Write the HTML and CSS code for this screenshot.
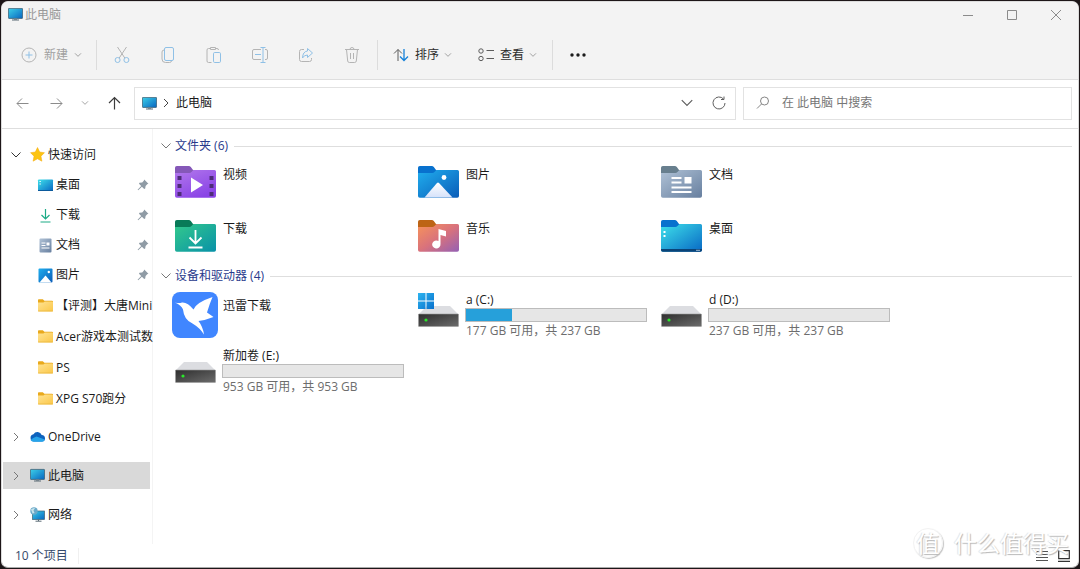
FILE: index.html
```html
<!DOCTYPE html>
<html lang="zh-CN">
<head>
<meta charset="utf-8">
<title>此电脑</title>
<link rel="stylesheet" href="styles.css">
</head>
<body>
<svg class="defs" width="0" height="0" aria-hidden="true">
  <defs>
    <linearGradient id="g-screen" x1="0" y1="0" x2="1" y2="1"><stop offset="0" stop-color="#3cd0e8"/><stop offset="1" stop-color="#0865c0"/></linearGradient>
    <linearGradient id="g-video" x1="0" y1="0" x2="0.6" y2="1"><stop offset="0" stop-color="#b278ec"/><stop offset="1" stop-color="#8a44e6"/></linearGradient>
    <linearGradient id="g-pic" x1="0" y1="0" x2="1" y2="1"><stop offset="0" stop-color="#20aeee"/><stop offset="1" stop-color="#0a5cb8"/></linearGradient>
    <linearGradient id="g-doc" x1="0" y1="0" x2="1" y2="1"><stop offset="0" stop-color="#b0c2d6"/><stop offset="1" stop-color="#677f9f"/></linearGradient>
    <linearGradient id="g-down" x1="0" y1="0" x2="1" y2="1"><stop offset="0" stop-color="#33c98c"/><stop offset="1" stop-color="#0891a8"/></linearGradient>
    <linearGradient id="g-music" x1="0" y1="0" x2="1" y2="1"><stop offset="0" stop-color="#f7935a"/><stop offset="0.5" stop-color="#d9727c"/><stop offset="1" stop-color="#9460b4"/></linearGradient>
    <linearGradient id="g-desk" x1="0" y1="0" x2="1" y2="1"><stop offset="0" stop-color="#3ee0ea"/><stop offset="1" stop-color="#0868c4"/></linearGradient>
    <linearGradient id="g-yellow" x1="0" y1="0" x2="1" y2="1"><stop offset="0" stop-color="#ffe393"/><stop offset="1" stop-color="#fbc748"/></linearGradient>
    <linearGradient id="g-peak" x1="0" y1="0" x2="0" y2="1"><stop offset="0" stop-color="#ffffff"/><stop offset="1" stop-color="#d6e2fa"/></linearGradient>
    <linearGradient id="g-box" x1="0" y1="0" x2="1" y2="1"><stop offset="0" stop-color="#2e2e2e"/><stop offset="1" stop-color="#6c6c6c"/></linearGradient>
    <linearGradient id="g-win" x1="0" y1="0" x2="1" y2="1"><stop offset="0" stop-color="#2cb4f0"/><stop offset="1" stop-color="#0870cc"/></linearGradient>
    <symbol id="pc" viewBox="0 0 15 13"><rect x="0.4" y="0.4" width="14.2" height="10" rx="0.6" fill="url(#g-screen)" stroke="#3d6173" stroke-width="0.8"/><path d="M6 10.5h3v1.2H6z" fill="#76858e"/><path d="M4 12h7" stroke="#5b6b75"/></symbol>
    <symbol id="chev-down" viewBox="0 0 12 12"><path d="M1.5 3.5 6 8l4.500-4.500" fill="none" stroke="currentColor"/></symbol>
    <symbol id="chev-right" viewBox="0 0 12 12"><path d="M4 2l4 4-4 4" fill="none" stroke="currentColor"/></symbol>
    <symbol id="folder-shape" viewBox="0 0 41 32"><path d="M0 7h14.500q1 0 2-1l1.200-1.200q.8-.7 1.800-.7H39.500q1.500 0 1.500 1.500V30q0 1.800-1.800 1.800H1.800Q0 31.800 0 30z"/></symbol>
    <symbol id="tab-shape" viewBox="0 0 41 32"><path d="M0 9V1.800Q0 0 1.800 0H13.800q1.200 0 2 1l2.400 3.200H38V9z"/></symbol>
    <symbol id="folder-small" viewBox="0 0 15 13"><path d="M0 3V1q0-.8.8-.8h4L6.400 1.800H14q1 0 1 .8V5H0z" fill="#e9a91c"/><path d="M0 3.400h5.400l1.400-1H14.200q.8 0 .8.800v8.400q0 .9-.9.9H.9q-.9 0-.9-.9z" fill="url(#g-yellow)"/><path d="M0 12h15" stroke="#e6b53d" stroke-width="0.7"/></symbol>
    <symbol id="pin" viewBox="0 0 12 12"><path d="M7.200.6 11.400 4.800 10.200 5.200 8.600 6.900 8.200 9.600 7.200 10 4.900 7.700 1.200 11.200.6 10.700 4.200 7 2 4.800 2.400 3.800 5.200 3.400 6.800 1.800z" fill="#8f9ba5"/></symbol>
    <symbol id="drive" viewBox="0 0 41 22"><path d="M9 1h23l8 8H1z" fill="#dcdde1"/><rect x="0.500" y="9" width="40" height="12.500" rx="0.600" fill="url(#g-box)" stroke="#9c9c9c" stroke-width="0.600"/><circle cx="8" cy="15" r="1.600" fill="#2ae82a"/></symbol>
  </defs>
</svg>

<div class="window">
  <header class="chrome">
    <div class="titlebar">
      <svg class="pc-icon"><use href="#pc"/></svg>
      <span class="title">此电脑</span>
      <div class="caption-buttons">
        <button aria-label="最小化"><svg width="12" height="12" viewBox="0 0 12 12"><path d="M1 6.500h10"/></svg></button>
        <button aria-label="最大化"><svg width="12" height="12" viewBox="0 0 12 12"><path d="M1.500 1.500h9v9h-9z"/></svg></button>
        <button aria-label="关闭"><svg width="12" height="12" viewBox="0 0 12 12"><path d="M1 1l10 10M11 1 1 11"/></svg></button>
      </div>
    </div>
    <div class="toolbar">
      <button class="tool-text muted new"><svg width="16" height="16" viewBox="0 0 16 16"><circle cx="8" cy="8" r="7" stroke="#b4b4b4"/><path d="M8 4.500v7M4.500 8h7" stroke="#8fc0e6"/></svg>新建<svg class="tiny"><use href="#chev-down"/></svg></button>
      <span class="sep"></span>
      <button class="tool muted" aria-label="剪切"><svg width="16" height="18" viewBox="0 0 16 18"><path d="M3.500 1 10.800 12M12.500 1 5.200 12" stroke="#b4b4b4"/><circle cx="3.600" cy="14" r="2.500" stroke="#8fc0e6"/><circle cx="12.400" cy="14" r="2.500" stroke="#8fc0e6"/></svg></button>
      <button class="tool muted" aria-label="复制"><svg width="16" height="18" viewBox="0 0 16 18"><path d="M4 4q-2 .2-2 2v7q0 3.500 3.500 3.500h4q1.700 0 2-1.500" stroke="#b4b4b4"/><rect x="4.500" y="1.500" width="9" height="13" rx="1.500" stroke="#8fc0e6"/></svg></button>
      <button class="tool muted" aria-label="粘贴"><svg width="16" height="18" viewBox="0 0 16 18"><path d="M4.500 2.500h-2q-1.500 0-1.500 1.500v11q0 1.500 1.500 1.500h3M9.500 2.500h1.500q1.500 0 1.500 1.500M4.500 1.500h5v2h-5z" stroke="#b4b4b4"/><rect x="7.500" y="6.500" width="7" height="10" rx="1.200" stroke="#8fc0e6"/></svg></button>
      <button class="tool muted" aria-label="重命名"><svg width="18" height="18" viewBox="0 0 18 18"><path d="M10 3.500H3q-1.500 0-1.500 1.500v7q0 1.500 1.500 1.500h7M14 3.500h1q1.500 0 1.500 1.500v7q0 1.500-1.500 1.500h-1" stroke="#b4b4b4"/><path d="M4 8.500h6M9.500 1.500h5M9.500 16.500h5M12 1.500v15" stroke="#8fc0e6"/></svg></button>
      <button class="tool muted" aria-label="共享"><svg width="16" height="16" viewBox="0 0 16 16"><path d="M6 2.500H3.500q-2 0-2 2v8q0 2 2 2h8q2 0 2-2V11" stroke="#b4b4b4"/><path d="M9.500 1.500 14.500 6l-5 4.500V8Q6 8 4.500 11 4.800 4.500 9.500 4z" stroke="#8fc0e6"/></svg></button>
      <button class="tool muted" aria-label="删除"><svg width="16" height="18" viewBox="0 0 16 18"><path d="M1 3.500h14M6 3.500q0-2 2-2t2 2M2.500 3.500l1.200 11.500q.2 1.500 1.700 1.500h5.200q1.500 0 1.700-1.500l1.200-11.500M6.500 7v6M9.500 7v6" stroke="#b4b4b4"/></svg></button>
      <span class="sep"></span>
      <button class="tool-text sort"><svg width="16" height="14" viewBox="0 0 16 14"><path d="M5 13V1.500M1 5.500l4-4 4 4" stroke="#5c5c5c"/><path d="M11 1v11.500M7 8.500l4 4 4-4" stroke="#1581d8" stroke-width="1.300"/></svg>排序<svg class="tiny"><use href="#chev-down"/></svg></button>
      <button class="tool-text view"><svg width="16" height="14" viewBox="0 0 16 14"><path d="M8.500 2.500h7.500M8.500 10.500h7.500" stroke="#5c5c5c"/><circle cx="3" cy="3" r="2.200" stroke="#5c5c5c"/><circle cx="3" cy="10.500" r="2.200" stroke="#5c5c5c"/></svg>查看<svg class="tiny"><use href="#chev-down"/></svg></button>
      <span class="sep"></span>
      <button class="tool" aria-label="查看更多"><svg width="16" height="4" viewBox="0 0 16 4"><g fill="#1b1b1b"><circle cx="2" cy="2" r="1.700"/><circle cx="8" cy="2" r="1.700"/><circle cx="14" cy="2" r="1.700"/></g></svg></button>
    </div>
  </header>

  <nav class="navbar" aria-label="导航">
    <div class="history">
      <button aria-label="后退"><svg width="13" height="13" viewBox="0 0 13 13"><path d="M12.500 6.500H1M6 1.500l-5 5 5 5" stroke="#8b8b8b"/></svg></button>
      <button aria-label="前进"><svg width="13" height="13" viewBox="0 0 13 13"><path d="M.5 6.500H12M7 1.500l5 5-5 5" stroke="#8b8b8b"/></svg></button>
      <button class="recent" aria-label="最近位置"><svg class="tiny"><use href="#chev-down"/></svg></button>
      <button aria-label="上移"><svg width="13" height="14" viewBox="0 0 13 14"><path d="M6.500 13.500V1.500M1 7l5.500-5.500L12 7" stroke="#3c3c3c" stroke-width="1.200"/></svg></button>
    </div>
    <div class="address">
      <svg class="pc-icon"><use href="#pc"/></svg>
      <svg class="crumb"><use href="#chev-right"/></svg>
      <span class="path">此电脑</span>
      <button aria-label="以前的位置"><svg width="14" height="14"><use href="#chev-down"/></svg></button>
      <button aria-label="刷新"><svg width="14" height="14" viewBox="0 0 14 14"><path d="M11.500 3A6 6 0 1 0 13 7M12 .5V3.500H9" stroke="#5f5f5f"/></svg></button>
    </div>
    <label class="search">
      <svg width="14" height="14" viewBox="0 0 14 14"><circle cx="8.500" cy="5" r="4" stroke="#858585"/><path d="M5.500 8 1 12.500" stroke="#858585"/></svg>
      <input type="text" aria-label="搜索" placeholder="在 此电脑 中搜索">
    </label>
  </nav>

  <div class="body">
    <aside class="sidebar">
      <a class="root open" href="#"><svg class="arrow"><use href="#chev-down"/></svg><svg class="ico" viewBox="0 0 15 15"><path d="M7.500.5 9.700 5l4.800.7-3.500 3.500.9 5-4.400-2.400L3.100 14.200 4 9.200.5 5.700 5.300 5z" fill="#fcc410" stroke="#f5a80c" stroke-width="0.500"/></svg>快速访问</a>
      <a class="row" href="#"><svg class="ico" viewBox="0 0 15 15"><rect y="1.500" width="15" height="11.500" rx="0.800" fill="url(#g-desk)"/><path d="M0 12.500h15" stroke="#0b5a9c"/><path d="M1.500 3.500h1.300M1.500 6h1.300" stroke="#fff"/></svg><span class="name">桌面</span><svg class="pin"><use href="#pin"/></svg></a>
      <a class="row" href="#"><svg class="ico" viewBox="0 0 15 15"><path d="M7.500 1v9.500M3.500 7l4 4 4-4M2.500 14h10" fill="none" stroke="#1cab86" stroke-width="1.200"/></svg><span class="name">下载</span><svg class="pin"><use href="#pin"/></svg></a>
      <a class="row" href="#"><svg class="ico" viewBox="0 0 15 15"><rect x="1.500" y="0.500" width="12" height="14" rx="1" fill="url(#g-doc)"/><path d="M3.500 5h4M3.500 7.500h4M3.500 10h8" stroke="#fff"/><path d="M8.500 4.500h3v3h-3z" fill="#fff"/></svg><span class="name">文档</span><svg class="pin"><use href="#pin"/></svg></a>
      <a class="row" href="#"><svg class="ico" viewBox="0 0 15 15"><rect x="0.500" y="0.500" width="14" height="14" rx="1" fill="url(#g-pic)"/><path d="M1.500 14.500 7.500 7.500l6 7z" fill="#fff"/><circle cx="10.800" cy="4" r="1.200" fill="#fff"/></svg><span class="name">图片</span><svg class="pin"><use href="#pin"/></svg></a>
      <a class="row folder-row" href="#"><svg class="ico"><use href="#folder-small"/></svg><span class="name">【评测】大唐Mini</span></a>
      <a class="row folder-row" href="#"><svg class="ico"><use href="#folder-small"/></svg><span class="name">Acer游戏本测试数</span></a>
      <a class="row folder-row" href="#"><svg class="ico"><use href="#folder-small"/></svg><span class="name">PS</span></a>
      <a class="row folder-row" href="#"><svg class="ico"><use href="#folder-small"/></svg><span class="name">XPG S70跑分</span></a>
      <a class="root" href="#"><svg class="arrow"><use href="#chev-right"/></svg><svg class="ico" viewBox="0 0 15 15"><path d="M3.800 12.500a3.700 3.700 0 0 1-.3-7.300A4.500 4.500 0 0 1 11.700 6q3.300.4 3.300 3.400T12 12.500z" fill="#0d62bd"/><path d="M.5 11Q3 8.500 6.500 7.500L14.800 10.500q-.8 2.200-2.800 2.200H3.800Q1.500 12.700.5 11z" fill="#27a4ea"/></svg>OneDrive</a>
      <a class="root selected" href="#"><svg class="arrow"><use href="#chev-right"/></svg><svg class="ico"><use href="#pc"/></svg>此电脑</a>
      <a class="root" href="#"><svg class="arrow"><use href="#chev-right"/></svg><svg class="ico" viewBox="0 0 15 15"><rect x="2.500" y="4" width="12" height="8.500" fill="url(#g-screen)" stroke="#3d6173" stroke-width="0.700"/><path d="M5.500 14.200h6M8.500 12.500v1.500" stroke="#5b6b75"/><circle cx="4" cy="4" r="3.700" fill="#6aa9c9"/><path d="M1 2.500q2-2 4-1.500L3.500 3.500 4.500 6 2.500 6.500z" fill="#c7e3ea"/></svg>网络</a>
    </aside>

    <main class="content">
      <section>
        <h2><svg class="arrow"><use href="#chev-down"/></svg>文件夹 (6)</h2>
        <div class="grid folders">
          <a class="item" href="#"><svg class="folder" viewBox="0 0 41 32"><use href="#tab-shape" fill="#8558b8"/><use href="#folder-shape" fill="url(#g-video)"/><g fill="#4d2c78"><path d="M2.500 10h4v4h-4zM2.500 18h4v4h-4zM2.500 26h4v4h-4zM34.500 10h4v4h-4zM34.500 18h4v4h-4zM34.500 26h4v4h-4z"/></g><path d="M16 11.500 28 19 16 26.500z" fill="#fff"/></svg><span>视频</span></a>
          <a class="item" href="#"><svg class="folder" viewBox="0 0 41 32"><use href="#tab-shape" fill="#0871ce"/><use href="#folder-shape" fill="url(#g-pic)"/><path d="M6.500 31.500 19 17q1-1 2 0l13.500 14.500z" fill="url(#g-peak)"/><circle cx="26" cy="11.500" r="2.400" fill="#fff"/></svg><span>图片</span></a>
          <a class="item" href="#"><svg class="folder" viewBox="0 0 41 32"><use href="#tab-shape" fill="#687f8e"/><use href="#folder-shape" fill="url(#g-doc)"/><path d="M10.500 12h10M10.500 16.500h10M10.500 21.500h20M10.500 26h20" stroke="#fff" stroke-width="1.800"/><path d="M23.500 11h7v6.500h-7z" fill="#fff"/></svg><span>文档</span></a>
          <a class="item" href="#"><svg class="folder" viewBox="0 0 41 32"><use href="#tab-shape" fill="#087a58"/><use href="#folder-shape" fill="url(#g-down)"/><path d="M20.500 10v13M14.500 17.500l6 6 6-6M13.500 27.500h14" fill="none" stroke="#fff" stroke-width="1.800"/></svg><span>下载</span></a>
          <a class="item" href="#"><svg class="folder" viewBox="0 0 41 32"><use href="#tab-shape" fill="#bd6415"/><use href="#folder-shape" fill="url(#g-music)"/><path d="M20.500 9l7.500 2v5.500l-5.500-1.500V24a4.200 4 0 1 1-2-3z" fill="#fff"/></svg><span>音乐</span></a>
          <a class="item" href="#"><svg class="folder" viewBox="0 0 41 32"><use href="#tab-shape" fill="#0871ce"/><use href="#folder-shape" fill="url(#g-desk)"/><path d="M0 29h41v1q0 1.800-1.800 1.800H1.800Q0 31.800 0 30z" fill="#0a4478"/><path d="M2.500 11h2v2h-2zM2.500 15h2v2h-2z" fill="#fff"/><path d="M35 30.300h4" stroke="#c8dcec" stroke-width="0.800"/></svg><span>桌面</span></a>
        </div>
      </section>
      <section>
        <h2><svg class="arrow"><use href="#chev-down"/></svg>设备和驱动器 (4)</h2>
        <div class="grid drives">
          <a class="item app" href="#"><svg class="xunlei" viewBox="0 0 46 46"><rect width="46" height="46" rx="8" fill="#4086ff"/><path d="M3 10.500Q7 11.500 10 10.500q5.500-.5 11.500 7Q24 10.500 40.500 5 37.500 12 35 20.500l6.500 4.500Q34 28 26.500 29 31 35 32 42.500 28 36 20.500 31.500 12 28 11 17.500 9.500 13.500 3 10.500z" fill="#fff"/></svg><span>迅雷下载</span></a>
          <a class="item" href="#"><svg class="disk" viewBox="0 0 41 34"><use href="#drive" y="12" width="41" height="22"/><path d="M0 0h7.500v7.500H0zM8.500 0H16v7.500H8.500zM0 8.500h7.500V16H0zM8.500 8.500H16V16H8.500z" fill="url(#g-win)"/></svg><div class="info"><span>a (C:)</span><div class="meter"><i style="width:25.500%"></i></div><small>177 GB 可用，共 237 GB</small></div></a>
          <a class="item" href="#"><svg class="disk" viewBox="0 0 41 34"><use href="#drive" y="12" width="41" height="22"/></svg><div class="info"><span>d (D:)</span><div class="meter"></div><small>237 GB 可用，共 237 GB</small></div></a>
          <a class="item" href="#"><svg class="disk" viewBox="0 0 41 34"><use href="#drive" y="12" width="41" height="22"/></svg><div class="info"><span>新加卷 (E:)</span><div class="meter"></div><small>953 GB 可用，共 953 GB</small></div></a>
        </div>
      </section>
    </main>
  </div>

  <footer class="status">
    <span class="count">10 个项目</span>
    <div class="views">
      <button aria-label="详细信息"><svg width="12" height="12" viewBox="0 0 12 12"><path d="M0 1.500h12M0 4.500h12M0 7.500h12M0 10.500h12" stroke="#555"/></svg></button>
      <button aria-label="大图标"><svg width="12" height="12" viewBox="0 0 12 12"><path d="M.7.700h10.600v8H.7zM0 11.400h12" stroke="#333" stroke-width="1.200"/></svg></button>
    </div>
  </footer>
  <div class="watermark"><span class="seal">值</span><span>什么值得买</span></div>
</div>
</body>
</html>
```
FILE: styles.css
```css
* { box-sizing: border-box; }

html, body { height: 100%; }

body {
  margin: 0;
  padding: 1px;
  background: #1d1618;
  color: #1a1a1a;
  font: 12px/16px "Open Sans", "Noto Sans CJK SC", sans-serif;
}

svg { display: block; flex: none; fill: none; overflow: visible; }
a { color: inherit; text-decoration: none; }
button {
  display: flex;
  align-items: center;
  justify-content: center;
  padding: 0;
  border: 0;
  background: none;
  color: inherit;
  font: inherit;
}

.defs { position: absolute; }

.window {
  position: relative;
  display: flex;
  flex-direction: column;
  height: 100%;
  overflow: hidden;
  border: 1px solid #dcdcdc;
  border-bottom-color: #aaa;
  border-radius: 7px;
  background: #fff;
}

.chrome { background: #f3f3f3; border-bottom: 1px solid #dedede; }

.pc-icon { width: 15px; height: 13px; }
.tiny { width: 8px; height: 8px; color: #777; }
.arrow { width: 12px; height: 12px; color: #777; }

/* title bar */
.titlebar { display: flex; align-items: center; height: 25px; padding-left: 6px; }
.title { margin-left: 2px; color: #999; }
.caption-buttons { display: flex; margin-left: auto; }
.caption-buttons button { width: 44px; height: 25px; }
.caption-buttons svg { stroke: #8b8b8b; }

/* command bar */
.toolbar { display: flex; align-items: center; height: 52px; padding: 4px 0 0 19px; color: #2c2c2c; }
.sep { width: 1px; height: 30px; margin: 0 2px; background: #dcdcdc; }
.tool { width: 46px; height: 32px; }
.tool-text { height: 32px; gap: 6px; }
.tool-text .tiny { margin-left: -1px; }
.new { gap: 7px; margin-right: 12px; }
.sort { margin-left: 13px; }
.view { margin: 0 13px 0 26px; }
.muted { color: #a0a0a0; }

/* address row */
.navbar {
  display: flex;
  align-items: center;
  height: 49px;
  padding: 0 6px 2px 0;
  border-bottom: 1px solid #dedede;
}
.history { display: flex; width: 132px; padding-left: 3px; }
.history button { width: 34px; height: 32px; }
.history .recent { width: 24px; }
.address, .search {
  display: flex;
  align-items: center;
  height: 33px;
  min-width: 0;
  border: 1px solid #e2e2e2;
}
.address { flex: 593; padding-left: 7px; }
.crumb { width: 12px; height: 12px; margin: 0 4px 0 3px; color: #444; }
.path { flex: 1; }
.address button { width: 32px; height: 30px; color: #5f5f5f; }
.search { flex: 315; margin-left: 7px; padding-left: 12px; }
.search input {
  flex: 1;
  min-width: 0;
  margin-left: 12px;
  padding: 0;
  border: 0;
  outline: 0;
  background: none;
  font: inherit;
}
.search input::placeholder { color: #767676; opacity: 1; }

/* body */
.body { display: flex; flex: 1; min-height: 0; }
.sidebar {
  width: 151px;
  padding: 12px 2px 0 1px;
  border-right: 1px solid #f4f4f4;
  white-space: nowrap;
}
.ico { width: 15px; height: 15px; margin-right: 3px; }
.root { display: flex; align-items: center; height: 27px; margin-bottom: 12px; padding-left: 7px; }
.root .arrow { margin-right: 8px; }
.root.open { margin-bottom: 2px; }
.root.open .arrow { color: #333; }
.selected { background: #d9d9d9; }
.row { display: flex; align-items: center; height: 30px; padding-left: 35px; }
.folder-row { height: 31px; }
.row + .root { margin-top: 9px; }
.name { flex: 1; }
.pin { width: 12px; height: 12px; margin-right: 1px; }

.content { flex: 1; min-width: 0; padding: 8px 6px 0 7px; }
h2 {
  display: flex;
  align-items: center;
  height: 18px;
  margin: 0;
  color: #283a8c;
  font-size: 12px;
  font-weight: normal;
}
h2 .arrow { margin-right: 3px; }
h2::after { content: ""; flex: 1; height: 1px; margin-left: 6px; background: #dedede; }
.grid {
  display: grid;
  grid-template-columns: repeat(auto-fill, 243px);
  padding: 11px 0 0 15px;
}
.folders { row-gap: 22px; padding-bottom: 15px; }
.folders span { margin-top: 1px; }
.drives { grid-auto-rows: 56px; padding-top: 7px; }
.item { display: flex; align-items: flex-start; }
.folder { width: 41px; height: 32px; margin-right: 7px; }
.disk { width: 41px; height: 34px; margin: 1px 6px 0 0; }
.xunlei { width: 46px; height: 46px; margin: 0 5px 0 -3px; }
.app span { margin-top: 6px; }
.info { display: flex; flex-direction: column; width: 182px; }
.info span, .info small { padding-left: 1px; }
.info small { margin-top: 1px; color: #6d6d6d; font-size: 12px; }
.meter { height: 14px; border: 1px solid #bcbcbc; background: #e6e6e6; }
.meter i { display: block; height: 100%; background: #26a0da; }

/* status bar */
.status { display: flex; align-items: center; height: 23px; padding: 1px 8px 0 13px; color: #34496b; }
.count { padding-right: 10px; border-right: 1px solid #f0f0f0; }
.views { display: flex; gap: 10px; margin-left: auto; }

.watermark {
  position: absolute;
  right: 9px;
  bottom: 9px;
  display: flex;
  align-items: center;
  gap: 11px;
  color: #fff;
  font-size: 23px;
  line-height: 30px;
  text-shadow: 1px 1px 1px #b8b8b8, -1px 0 1px #e2e2e2;
  pointer-events: none;
}
.seal {
  width: 30px;
  height: 30px;
  border: 1px solid #f2f2f2;
  border-radius: 50%;
  box-shadow: 1px 1px 1px #c4c4c4;
  text-align: center;
  line-height: 28px;
}
```
